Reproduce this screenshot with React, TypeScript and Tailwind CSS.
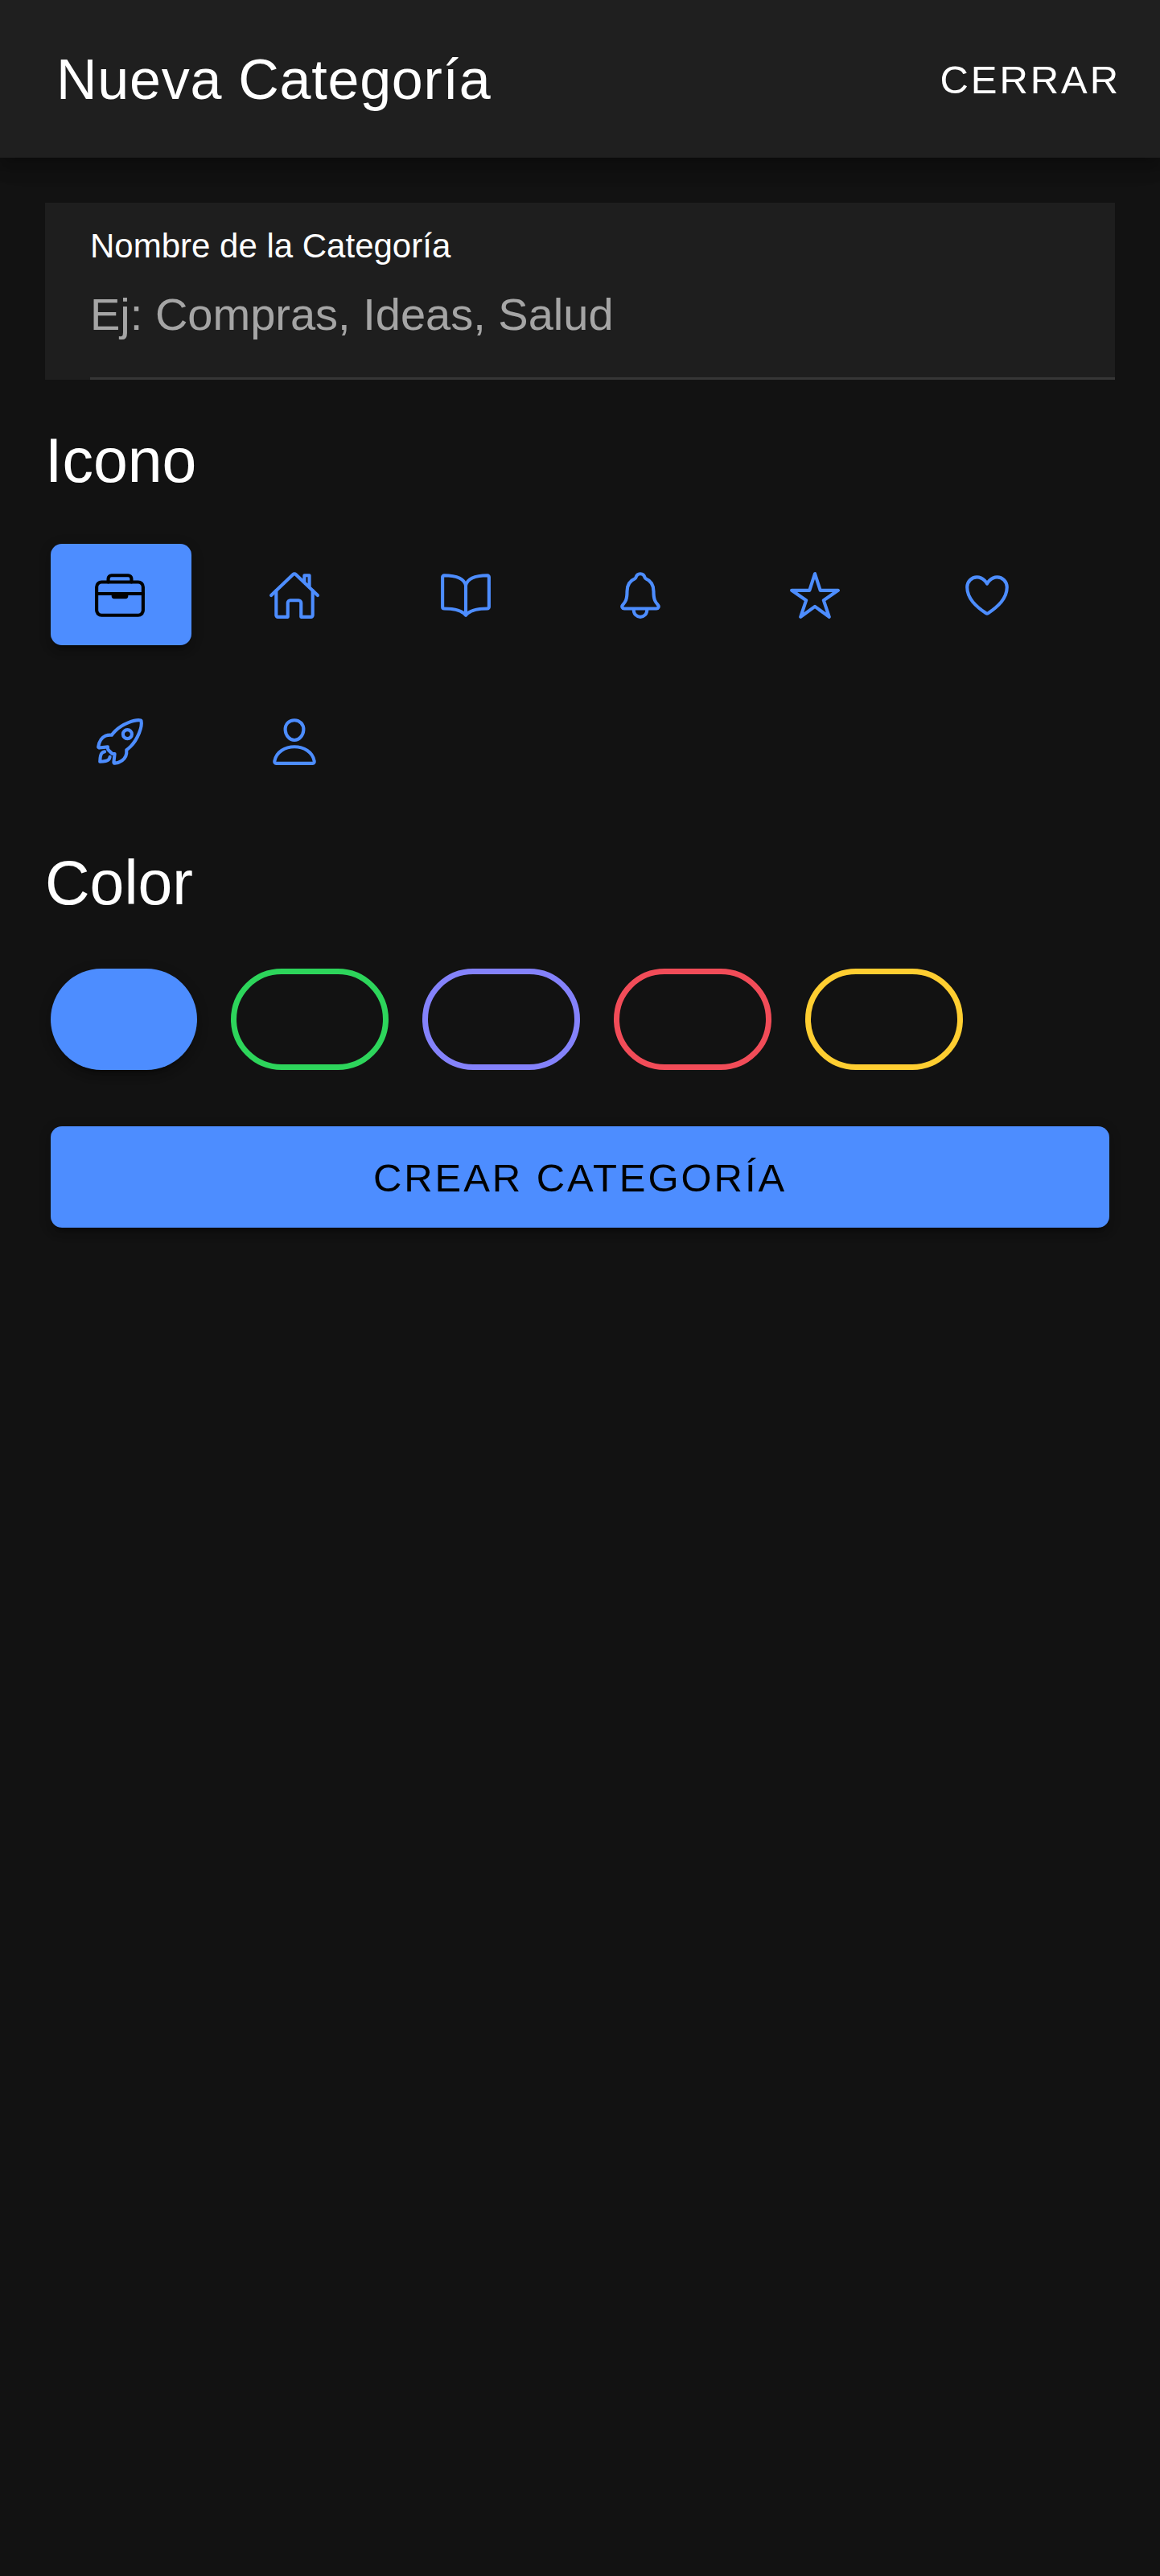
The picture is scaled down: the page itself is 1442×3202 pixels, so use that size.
import type { IconType } from "react-icons";
import {
  IoBriefcaseOutline,
  IoHomeOutline,
  IoBookOutline,
  IoNotificationsOutline,
  IoStarOutline,
  IoHeartOutline,
  IoRocketOutline,
  IoPersonOutline,
} from "react-icons/io5";

const icons: { name: string; Icon: IconType }[] = [
  { name: "briefcase", Icon: IoBriefcaseOutline },
  { name: "home", Icon: IoHomeOutline },
  { name: "book", Icon: IoBookOutline },
  { name: "notifications", Icon: IoNotificationsOutline },
  { name: "star", Icon: IoStarOutline },
  { name: "heart", Icon: IoHeartOutline },
  { name: "rocket", Icon: IoRocketOutline },
  { name: "person", Icon: IoPersonOutline },
];

const outlineColors = [
  { name: "success", border: "border-[#2dd55b]" },
  { name: "tertiary", border: "border-[#8482fb]" },
  { name: "danger", border: "border-[#f24c58]" },
  { name: "warning", border: "border-[#ffce31]" },
];

function Header() {
  return (
    <header className="relative flex h-[196px] items-center justify-between bg-[#1f1f1f] pt-[2px] pl-[70px] pr-[49px] shadow-[0_7px_14px_-3.5px_rgba(0,0,0,0.2),0_14px_17.5px_0_rgba(0,0,0,0.14),0_3.5px_35px_0_rgba(0,0,0,0.12)]">
      <h1 className="text-[70px] leading-[80px] tracking-[0.0107em]">Nueva Categoría</h1>
      <button className="text-[49px] leading-[56px] tracking-[0.06em] uppercase">Cerrar</button>
    </header>
  );
}

function NameField() {
  return (
    <label className="flex h-[220px] flex-col bg-[#1e1e1e] pl-14">
      <span className="mt-[30px] text-[42px] leading-[48px]">Nombre de la Categoría</span>
      <input
        type="text"
        placeholder="Ej: Compras, Ideas, Salud"
        className="mt-[29px] h-16 w-full bg-transparent text-[56px] leading-[64px] outline-none placeholder:text-white/60"
      />
      <span className="mt-auto h-[3px] bg-[#363636]" />
    </label>
  );
}

function IconPicker() {
  return (
    <div className="grid grid-cols-[217px_213px_217px_217px_214px_175px] gap-y-14">
      {icons.map(({ name, Icon }, i) => (
        <button
          key={name}
          aria-label={name}
          className={
            i === 0
              ? "flex h-[126px] w-[175px] items-center rounded-[14px] bg-[#4d8dff] pt-[3px] pl-[52.5px] text-black shadow-[0_10.5px_3.5px_-7px_rgba(0,0,0,0.2),0_7px_7px_0_rgba(0,0,0,0.14),0_3.5px_17.5px_0_rgba(0,0,0,0.12)]"
              : "flex h-[126px] w-[175px] items-center rounded-[14px] pt-[3px] pl-[52.75px] text-[#4d8dff]"
          }
        >
          <Icon className="size-[66px]" />
        </button>
      ))}
    </div>
  );
}

function ColorPicker() {
  return (
    <div className="flex gap-[42px]">
      <button
        aria-label="primary"
        className="h-[126px] w-[182px] rounded-full bg-[#4d8dff] shadow-[0_10.5px_3.5px_-7px_rgba(0,0,0,0.2),0_7px_7px_0_rgba(0,0,0,0.14),0_3.5px_17.5px_0_rgba(0,0,0,0.12)]"
      />
      {outlineColors.map(({ name, border }) => (
        <button key={name} aria-label={name} className={`h-[126px] w-[196px] rounded-full border-[7px] ${border}`} />
      ))}
    </div>
  );
}

export default function App() {
  return (
    <div className="flex min-h-[3202px] w-[1442px] flex-col bg-[#121212] font-['Liberation_Sans',Arial,sans-serif] text-white">
      <Header />
      <main className="flex flex-col px-14 pt-14">
        <NameField />
        <h2 className="mt-[54px] text-[77px] leading-[92px]">Icono</h2>
        <div className="mt-[57.5px] px-[7px]">
          <IconPicker />
        </div>
        <h2 className="mt-[67.5px] text-[77px] leading-[92px]">Color</h2>
        <div className="mt-[61px] px-[7px]">
          <ColorPicker />
        </div>
        <div className="mt-[70px] flex px-[7px]">
          <button className="h-[126px] w-full rounded-[14px] bg-[#4d8dff] pt-[2px] text-[49px] leading-[56px] tracking-[0.06em] text-black uppercase shadow-[0_10.5px_3.5px_-7px_rgba(0,0,0,0.2),0_7px_7px_0_rgba(0,0,0,0.14),0_3.5px_17.5px_0_rgba(0,0,0,0.12)]">
            Crear Categoría
          </button>
        </div>
      </main>
    </div>
  );
}
